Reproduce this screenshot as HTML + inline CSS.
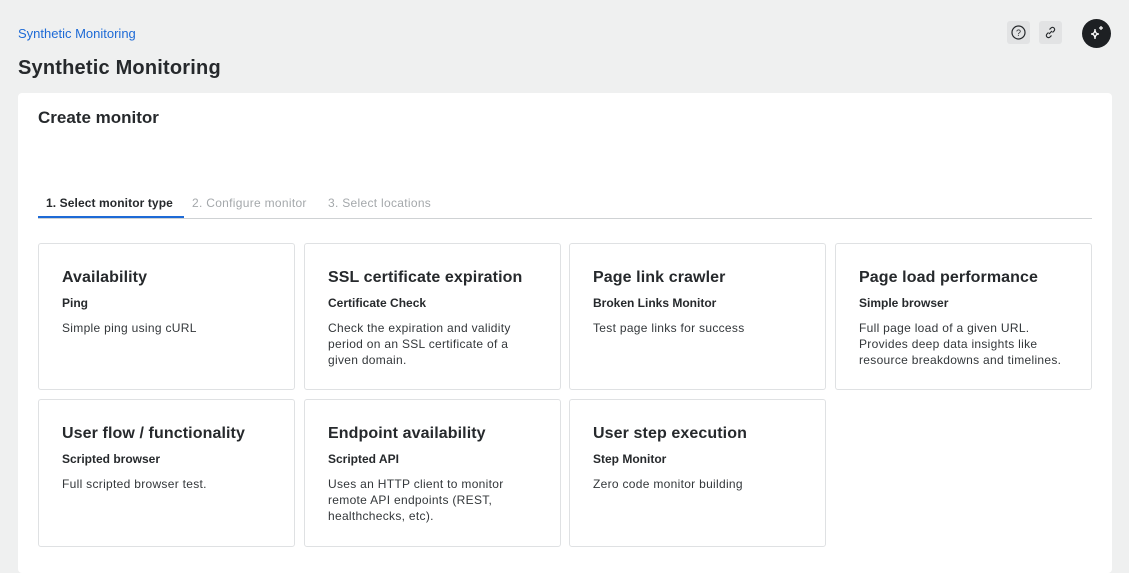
<!DOCTYPE html><html><head><style>
body{margin:0;width:1129px;height:562px;background:#eff0f0;font-family:"Liberation Sans",sans-serif;color:#26292c;overflow:hidden;position:relative}
.bc{position:absolute;left:18px;top:26px;font-size:13px;color:#1d6ad6}
h1{position:absolute;left:18px;top:57px;margin:0;font-size:20px;font-weight:600;color:#26292c;letter-spacing:0.2px}
.ib{position:absolute;top:21px;width:23px;height:23px;background:#e2e3e4;border-radius:3px}
.ai{position:absolute;left:1082px;top:19px;width:29px;height:29px;border-radius:50%;background:#1d2023}
.panel{position:absolute;left:18px;top:93px;width:1094px;height:480px;background:#fff;border-radius:4px}
h2{position:absolute;left:38px;top:108px;margin:0;font-size:17px;font-weight:600}
.tabs{position:absolute;left:38px;top:195px;width:1054px;height:23px;border-bottom:1px solid #cfd2d4;font-size:12px;letter-spacing:0.3px}
.tabs span{position:absolute;top:1px;color:#a4a8ab}
.tabs .a{color:#26292c;font-weight:600;left:8px;letter-spacing:0.1px}
.ul{position:absolute;left:0;top:21px;width:146px;height:2px;background:#1d6ad6}
.c{position:absolute;width:257px;height:147px;border:1px solid #dfe1e3;border-radius:3px;box-sizing:border-box;padding:0 23px}
.c b{display:block;margin-top:25px;font-size:16px;font-weight:600;letter-spacing:0.1px}
.c i{display:block;font-style:normal;font-weight:600;font-size:12px;margin-top:9px}
.c p{margin:10px 0 0;font-size:12px;line-height:16px;color:#33373a;letter-spacing:0.3px}
</style></head><body>
<div class="bc">Synthetic Monitoring</div>
<h1>Synthetic Monitoring</h1>
<div class="ib" style="left:1007px"><svg width="23" height="23"><circle cx="11.5" cy="11.5" r="6.5" fill="none" stroke="#26292c" stroke-width="1.2"/><text x="11.5" y="15" font-size="9" text-anchor="middle" font-family="Liberation Sans" fill="#26292c">?</text></svg></div>
<div class="ib" style="left:1039px"><svg width="23" height="23"><g fill="none" stroke="#26292c" stroke-width="1.2"><path d="M10 13l3-3"/><path d="M9.5 11.5l-1.5 1.5a2 2 0 0 0 3 3l1.5-1.5"/><path d="M13.5 11.5l1.5-1.5a2 2 0 0 0-3-3l-1.5 1.5"/></g></svg></div>
<div class="ai"><svg width="29" height="29"><g fill="none" stroke="#fff" stroke-width="1.2"><path d="M13 10q0 5 -4 5q4 0 4 5q0 -5 4 -5q-4 0 -4 -5z"/><path d="M19 7v4M17 9h4"/></g></svg></div>
<div class="panel"></div>
<h2>Create monitor</h2>
<div class="tabs"><span class="a">1. Select monitor type</span><span style="left:154px">2. Configure monitor</span><span style="left:290px">3. Select locations</span><div class="ul"></div></div>
<div class="c" style="left:38px;top:243px"><b>Availability</b><i>Ping</i><p>Simple ping using cURL</p></div>
<div class="c" style="left:304px;top:243px"><b>SSL certificate expiration</b><i>Certificate Check</i><p>Check the expiration and validity period on an SSL certificate of a given domain.</p></div>
<div class="c" style="left:569px;top:243px"><b>Page link crawler</b><i>Broken Links Monitor</i><p>Test page links for success</p></div>
<div class="c" style="left:835px;top:243px"><b>Page load performance</b><i>Simple browser</i><p>Full page load of a given URL. Provides deep data insights like resource breakdowns and timelines.</p></div>
<div class="c" style="left:38px;top:399px;height:148px"><b>User flow / functionality</b><i>Scripted browser</i><p>Full scripted browser test.</p></div>
<div class="c" style="left:304px;top:399px;height:148px"><b>Endpoint availability</b><i>Scripted API</i><p>Uses an HTTP client to monitor remote API endpoints (REST, healthchecks, etc).</p></div>
<div class="c" style="left:569px;top:399px;height:148px"><b>User step execution</b><i>Step Monitor</i><p>Zero code monitor building</p></div>
</body></html>
